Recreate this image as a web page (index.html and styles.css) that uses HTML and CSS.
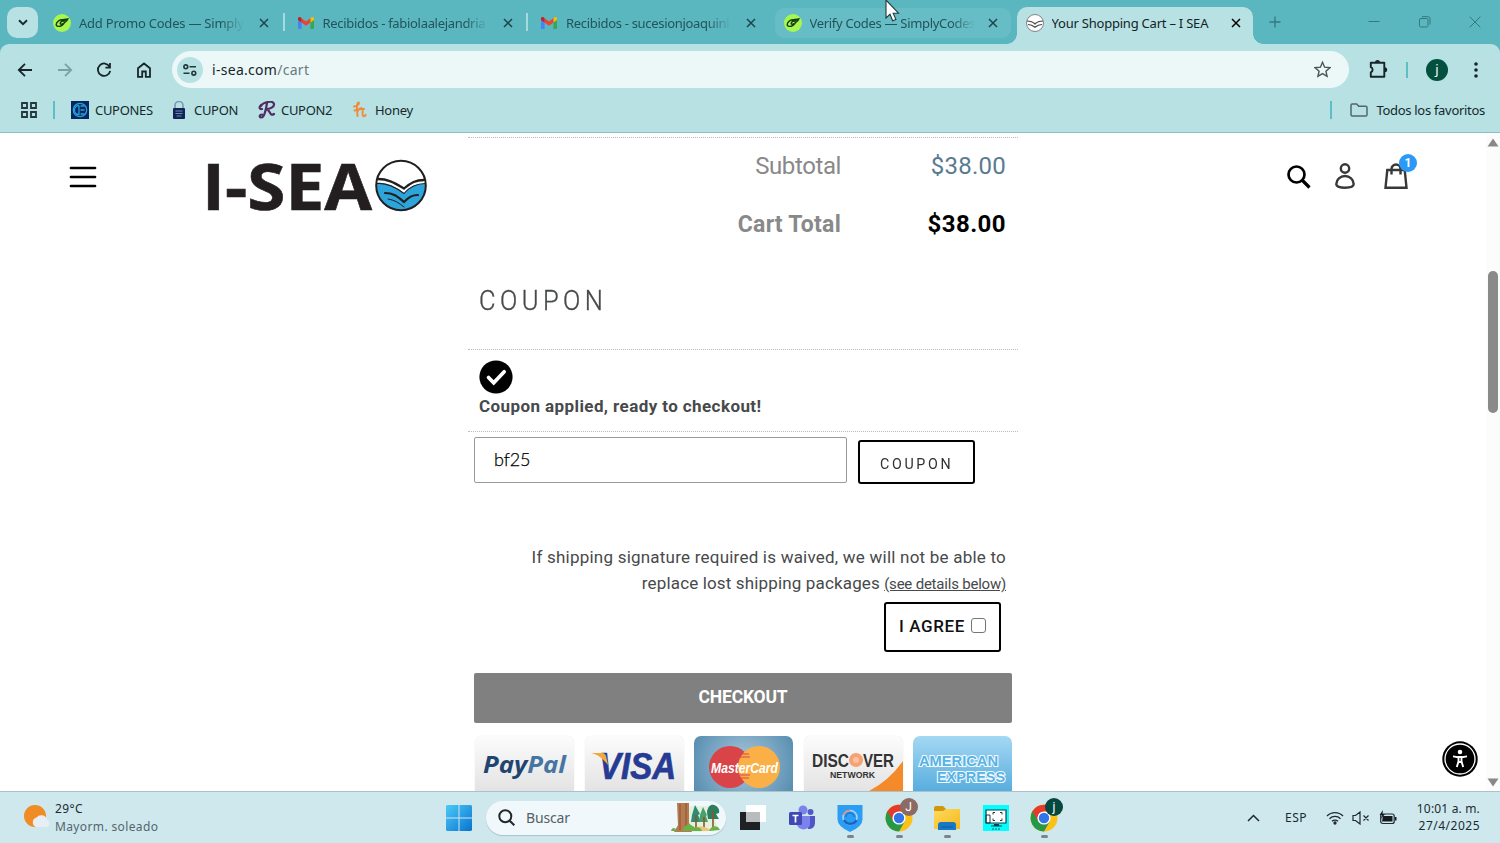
FILE: index.html
```html
<!DOCTYPE html>
<html lang="es">
<head>
<meta charset="utf-8">
<title>Your Shopping Cart – I SEA</title>
<link rel="stylesheet" href="styles.css">
</head>
<body>
<svg class="defs" width="0" height="0" aria-hidden="true">
  <defs>
    <symbol id="x" viewBox="0 0 10 10"><path d="M1 1l8 8M9 1L1 9" fill="none" stroke="currentColor" stroke-width="1.5"/></symbol>
    <symbol id="simply" viewBox="0 0 18 18"><circle cx="9" cy="9" r="9" fill="#a6f750"/><path d="M10.500 6C7 5 3.300 8 3.200 10.500c0 2.500 3.500 2.300 5.800.8 2-1.300 3-3 2-4-1.200-1-3.800.6-3.800 2.200 0 1 1.500.8 2.300.2M8.500 7.500L14.800 5c-.5 1.500-1.500 2.500-3 3.500M9.500 5.600l5.300-.6" fill="none" stroke="#173d16" stroke-width="1.400" stroke-linecap="round"/></symbol>
    <symbol id="gmail" viewBox="0 0 16 12"><path d="M0 2v9a1 1 0 001 1h2.600V5z" fill="#4285f4"/><path d="M16 2v9a1 1 0 01-1 1h-2.600V5z" fill="#34a853"/><path d="M12.400 1.400V5.500L16 3V1.500C16 0 14.300-.4 13.200.5z" fill="#fbbc04"/><path d="M3.600 5.500V1.300L8 4.600l4.400-3.300v4.200L8 8.800z" fill="#ea4335"/><path d="M0 1.500V3l3.600 2.600V1.300L2.800.5C1.700-.4 0 0 0 1.500z" fill="#c5221f"/></symbol>
    <symbol id="chrome" viewBox="0 0 28 28"><circle cx="14" cy="14" r="13.500" fill="#fbc116"/><path d="M2.300 7.300A13.500 13.500 0 0014 27.500L20 17 14 14z" fill="#279847"/><path d="M14 7.500h11.700A13.500 13.500 0 002.300 7.300L8.200 17z" fill="#e33b2e"/><circle cx="14" cy="14" r="6.600" fill="#fff"/><circle cx="14" cy="14" r="5.200" fill="#2f74e8"/></symbol>
    <linearGradient id="win" x1="0" y1="0" x2="1" y2="1"><stop offset="0" stop-color="#4dcaf8"/><stop offset="1" stop-color="#0873cf"/></linearGradient>
    <linearGradient id="fold" x1="0" y1="0" x2="1" y2="1"><stop offset="0" stop-color="#ffd95b"/><stop offset="1" stop-color="#f6b91e"/></linearGradient>
  </defs>
</svg>

<header class="tabs">
  <div class="tab-search"><svg width="10" height="7" viewBox="0 0 10 7"><path d="M1 1.200l4 4 4-4" fill="none" stroke="#1b2c2d" stroke-width="2"/></svg></div>
  <div class="tab">
    <svg class="fav" viewBox="0 0 18 18"><use href="#simply"/></svg><span class="tab-title fade">Add Promo Codes — Simply</span><svg class="close"><use href="#x"/></svg>
  </div>
  <div class="sep"></div>
  <div class="tab">
    <svg class="fav mail" viewBox="0 0 16 12"><use href="#gmail"/></svg><span class="tab-title fade tight">Recibidos - fabiolaalejandria</span><svg class="close"><use href="#x"/></svg>
  </div>
  <div class="sep"></div>
  <div class="tab">
    <svg class="fav mail" viewBox="0 0 16 12"><use href="#gmail"/></svg><span class="tab-title fade tight">Recibidos - sucesionjoaquinl</span><svg class="close"><use href="#x"/></svg>
  </div>
  <div class="sep hidden"></div>
  <div class="tab hover">
    <svg class="fav" viewBox="0 0 18 18"><use href="#simply"/></svg><span class="tab-title fade tight">Verify Codes — SimplyCodes</span><svg class="close"><use href="#x"/></svg>
  </div>
  <div class="tab active">
    <svg class="fav" viewBox="0 0 18 18"><circle cx="9" cy="9" r="8.500" fill="#fff" stroke="#777" stroke-width=".9"/><path d="M1 7c4 0 6 1 8 3 2-2 4-3 8-3M2 10.500c3.500 0 5 1 7 2.700 2-1.700 3.500-2.700 7-2.700" fill="none" stroke="#444" stroke-width="1.200"/></svg><span class="tab-title">Your Shopping Cart – I SEA</span><svg class="close"><use href="#x"/></svg>
  </div>
  <svg class="newtab" width="12" height="12"><path d="M6 .5v11M.5 6h11" stroke="#35787d" stroke-width="1.300"/></svg>
  <div class="window-controls">
    <svg width="12" height="12"><path d="M.5 5.500h11" stroke="#35787d"/></svg>
    <svg width="12" height="12" fill="none" stroke="#35787d"><rect x=".5" y="2.500" width="8.500" height="8.500" rx="1.500"/><path d="M3 .7h6a2 2 0 012 2v6"/></svg>
    <svg width="12" height="12"><path d="M.7.7l10.600 10.600M11.300.7L.7 11.300" stroke="#35787d"/></svg>
  </div>
</header>

<div class="chrome">
  <nav class="toolbar">
    <svg class="nav" viewBox="0 0 16 16"><path d="M15 8H2M8 1.800L1.800 8 8 14.200"/></svg>
    <svg class="nav dim" viewBox="0 0 16 16"><path d="M1 8h13M8 1.800L14.200 8 8 14.200"/></svg>
    <svg class="nav" viewBox="0 0 16 16"><path d="M13.600 4.800A6.200 6.200 0 1014.200 8.800M14 1v4.600H9.400"/></svg>
    <svg class="nav" viewBox="0 0 16 16"><path d="M2 6.200L8 1.500l6 4.700v8.600H9.800V9.500H6.200v5.300H2z"/></svg>
    <div class="omnibox">
      <div class="site"><svg width="14" height="12" fill="none" stroke="#22383a" stroke-width="1.600"><circle cx="2.800" cy="2.800" r="1.900"/><path d="M6.500 2.800H13M.5 9.200h6"/><circle cx="10.800" cy="9.200" r="1.900"/></svg></div>
      <span class="url">i-sea.com<span>/cart</span></span>
      <svg class="star" width="17" height="17" viewBox="0 0 17 17"><path d="M8.500 1.300l2.100 4.900 5.300.5-4 3.500 1.200 5.200-4.600-2.800-4.600 2.800 1.200-5.200-4-3.500 5.300-.5z" fill="none" stroke="#4b5558" stroke-width="1.400"/></svg>
    </div>
    <svg class="puzzle" width="19" height="19" viewBox="0 0 19 19"><path d="M1.800 2.800H15.300v13.900H1.800v-4.400a2.700 2.700 0 000-5.100z" fill="none" stroke="#182528" stroke-width="1.900" stroke-linejoin="round"/><path d="M6 2.500a2.500 2.500 0 015 0zM15.700 7.300a2.500 2.500 0 010 5z" fill="#182528"/></svg>
    <div class="rule"></div>
    <div class="avatar">j</div>
    <svg class="dots" width="4" height="16" fill="#182528"><circle cx="2" cy="2" r="1.800"/><circle cx="2" cy="8" r="1.800"/><circle cx="2" cy="14" r="1.800"/></svg>
  </nav>
  <nav class="bookmarks">
    <svg class="apps" width="16" height="16" fill="none" stroke="#22383a" stroke-width="1.800"><path d="M1 1h5v5H1zM10 1h5v5h-5zM1 10h5v5H1zM10 10h5v5h-5z"/></svg>
    <div class="rule"></div>
    <div class="bookmark b1"><svg width="18" height="18"><path d="M0 0h18v18H0z" fill="#06275c"/><g fill="none" stroke="#25a1df" stroke-width="1.300"><circle cx="9" cy="9" r="6.700"/><path d="M8 4.500a4.500 4.500 0 000 9V4.500M9.500 5h4M9.500 9h4M9.500 13h4"/></g></svg><span>CUPONES</span></div>
    <div class="bookmark b2"><svg width="14" height="18"><path d="M3 8V4.500a4 4 0 018 0V8" fill="none" stroke="#7898b4" stroke-width="1.600"/><rect x="1" y="7" width="12" height="11" rx="1" fill="#102456"/><path d="M3.500 10h7M3.500 12.500h7M4.500 15h5" stroke="#7187b5"/></svg><span>CUPON</span></div>
    <div class="bookmark b3"><svg width="18" height="18"><path d="M3 5C5 1 15-1 16 3c.6 3-4 5-8 5 4 0 3.500 8 8 5M9 2C8 9 6 17 3 16.500c-2-.4-1.500-3 1-3M4 8c-3 .5-3-2-1-4" fill="none" stroke="#512b63" stroke-width="2.200" stroke-linecap="round"/></svg><span>CUPON2</span></div>
    <div class="bookmark b4"><svg width="14" height="17" viewBox="0 0 14 17"><path d="M1 5.500C3.500 5.500 6.500 3.500 6 1.800 5.300.6 3.800 2.500 3.900 6L4.500 15M4.500 10.500C6 6.500 10 6 9.800 9.500c-.2 2.500-1 5.300.8 5.700 1 .2 1.900-.4 2-1.400M1.500 9.500c3-1 6-1.500 9.500-1.500" fill="none" stroke="#f18b3a" stroke-width="1.900" stroke-linecap="round"/></svg><span>Honey</span></div>
    <div class="rule all-rule"></div>
    <div class="bookmark all"><svg width="18" height="14"><path d="M1 2.200A1.200 1.200 0 012.200 1h4.500l2 2.200h7A1.300 1.300 0 0117 4.500v7.300a1.200 1.200 0 01-1.200 1.200H2.200A1.200 1.200 0 011 11.800z" fill="none" stroke="#53676b" stroke-width="1.500"/></svg><span>Todos los favoritos</span></div>
  </nav>
</div>

<main class="page">
  <div class="left">
    <svg class="menu" width="28" height="22"><path d="M2 2h24M2 11h24M2 20h24" stroke="#000" stroke-width="2.700" stroke-linecap="round"/></svg>
    <svg class="logo" width="230" height="70" viewBox="-10 -8 230 70">
      <text x="-7" y="50.500" textLength="170" lengthAdjust="spacingAndGlyphs" class="logo-text">I-SEA</text>
      <circle cx="192" cy="26.500" r="24.500" fill="#fff"/>
      <path d="M168 24c10-1 19 4 27 10 6-7 13-10 21.500-10A24.500 24.500 0 11168 24z" fill="#2da5da"/>
      <path d="M168.500 21c11 0 18 5 26.500 10 7-6 12-9 20.500-9l1 2.500C208 24 201 27 195 34c-8-6-17-11-27-10z" fill="#fff"/>
      <g fill="none" stroke="#231f20" stroke-linecap="round"><circle cx="192" cy="26.500" r="24.800" stroke-width="2"/><path d="M169 20c11 0 18 5 26 9.500 7-6 12-8.500 20-8.500" stroke-width="2.300"/><path d="M168 24.500c10-1 19 4 27 10 6-7 13-10 21.500-10" stroke-width="1.100"/><path d="M176 34c9 0 13 4 19 9 5-5 8-7 14-7" stroke-width="2.200"/><path d="M179 40c7 1 11 4 16 8" stroke-width="1"/></g>
    </svg>
  </div>

  <section class="cart">
    <div class="row subtotal"><span>Subtotal</span><b>$38.00</b></div>
    <div class="row total"><span>Cart Total</span><b>$38.00</b></div>
    <h2><span>COUPON</span></h2>
    <div class="applied">
      <svg width="34" height="34"><circle cx="17" cy="17" r="16.600"/><path d="M9.500 17.500l5.200 5.300 10.500-11" fill="none" stroke="#fff" stroke-width="3.700" stroke-linecap="round"/></svg>
      <strong>Coupon applied, ready to checkout!</strong>
    </div>
    <div class="coupon-form"><div class="field">bf25</div><div class="apply"><span>COUPON</span></div></div>
    <p class="notice"><span class="n1">If shipping signature required is waived, we will not be able to</span><br><span class="n2">replace lost shipping packages</span> <a>(see details below)</a></p>
    <label class="agree">I AGREE<i></i></label>
    <div class="checkout">CHECKOUT</div>
    <div class="cards">
      <svg class="card pale" viewBox="0 0 99 62"><text x="8" y="37" textLength="83" lengthAdjust="spacingAndGlyphs" class="paypal"><tspan fill="#20456f">Pay</tspan><tspan fill="#4675a2">Pal</tspan></text></svg>
      <svg class="card pale" viewBox="0 0 99 62"><text x="14" y="43" textLength="77" lengthAdjust="spacingAndGlyphs" class="visa">VISA</text><path d="M6 17h12q3 1 3.500 5l1.500 7C18 23 14 19 6 17z" fill="#f0aa3b"/></svg>
      <svg class="card master" viewBox="0 0 99 62"><circle cx="36" cy="31" r="21" fill="#d94448"/><circle cx="65" cy="31" r="21" fill="#fbb047"/><path d="M46 18h9M45 21h11M45 39h11M46 42h9" stroke="#d94448"/><text x="17" y="36.500" textLength="67" lengthAdjust="spacingAndGlyphs" class="mc">MasterCard</text></svg>
      <svg class="card pale" viewBox="0 0 99 62"><path d="M99 25v37H48Q80 52 99 25z" fill="#f58a2b"/><text x="8" y="30.500" textLength="37" lengthAdjust="spacingAndGlyphs" class="disc">DISC</text><circle cx="52" cy="24" r="7" fill="#f7a274"/><circle cx="52" cy="24" r="3" fill="#fac0a0"/><text x="59" y="30.500" textLength="31" lengthAdjust="spacingAndGlyphs" class="disc">VER</text><text x="26" y="41.500" textLength="45" lengthAdjust="spacingAndGlyphs" class="net">NETWORK</text></svg>
      <svg class="card amex" viewBox="0 0 99 62"><text x="6" y="29.500" textLength="79" lengthAdjust="spacingAndGlyphs" class="am">AMERICAN</text><text x="24" y="45.500" textLength="68" lengthAdjust="spacingAndGlyphs" class="am">EXPRESS</text></svg>
    </div>
  </section>

  <div class="right">
    <div class="actions">
      <svg width="24" height="24" fill="none" stroke="#000"><circle cx="9.500" cy="9.500" r="8" stroke-width="2.700"/><path d="M15.500 15.500l7 7" stroke-width="3.200"/></svg>
      <svg width="20" height="26" fill="none" stroke="#36383a" stroke-width="2.400"><circle cx="10" cy="5.500" r="4.200"/><path d="M1.300 21c0-4.500 4-8 8.700-8s8.700 3.500 8.700 8c0 2.500-3.700 3.700-8.700 3.700S1.300 23.500 1.300 21z"/></svg>
      <div class="bag"><svg width="24" height="26" fill="none" stroke="#36383a" stroke-width="2.400"><path d="M3.300 7h17.400L22.500 24.700h-21zM7.500 11.500V6a4.500 4.500 0 019 0v5.500"/></svg><em>1</em></div>
    </div>
    <svg class="access" width="36" height="36"><circle cx="18" cy="18" r="17.700"/><circle cx="18" cy="18" r="15" fill="none" stroke="#fff" stroke-width="1.300"/><circle cx="18" cy="11" r="2.300" fill="#fff"/><path d="M11 15.400l5.500 1v4L14.800 26M25 15.400l-5.500 1v4l1.700 5.600M16.500 16h3v5h-3z" fill="none" stroke="#fff" stroke-width="1.900"/></svg>
  </div>
  <div class="scroll"><svg width="12" height="9"><path d="M6 .5L11.500 8.500H.5z" fill="#888"/></svg><div class="thumb"></div><svg width="12" height="9"><path d="M6 8.500L11.500.5H.5z" fill="#888"/></svg></div>
</main>

<footer class="taskbar">
  <div class="weather"><svg width="27" height="25"><circle cx="12" cy="12" r="11" fill="#f08c24"/><path d="M13 23a5 5 0 01.5-9.500 6 6 0 0110.500 2 4 4 0 01-.5 7.500z" fill="#e9edf4"/></svg><div>29°C<br><span>Mayorm. soleado</span></div></div>
  <div class="dock">
    <svg class="start" width="26" height="26"><path d="M1 0h11.500v12.500H0V1zM13.500 0H25l1 1v11.500H13.500zM0 13.500h12.500V26H1l-1-1zM13.500 13.500H26V25l-1 1H13.500z" fill="url(#win)"/></svg>
    <div class="search"><svg width="17" height="17" fill="none" stroke="#22272b" stroke-width="2"><circle cx="7.300" cy="7.300" r="6"/><path d="M11.700 11.700l4.600 4.600"/></svg><span>Buscar</span>
      <svg class="forest" width="50" height="30" viewBox="0 0 50 30"><path d="M19 3h22l6 24-18 2H13z" fill="#e3f2dc"/><path d="M21 12l3-10 5 9-2 1 3 7H20z" fill="#2f8b74"/><path d="M29 12l3-8 4 8-1 1 2 6h-9z" fill="#4aa06c"/><path d="M36 9c1-6 4-8 7-7 4 1 6 5 5 8l-3 1 3 5h-11z" fill="#2b7f60"/><path d="M25 12v14M33 14v12M42 8v18" stroke="#8c552b" stroke-width="1.600"/><path d="M6 0h12v22l3 7H3l4-7z" fill="#b57a50"/><path d="M9 1v26M15 0v28" stroke="#8a5533" stroke-width="1"/><path d="M21 28c5-7 14-5 20 0z" fill="#e9c67a"/><path d="M12 28c0-5 4-5 6-8 2 3 5 3 6 5 3-2 6 0 7 3zM38 28c2-5 8-7 11-1zM0 28c1-4 4-4 6 0z" fill="#6cb04a"/></svg>
    </div>
    <svg class="app tv" width="28" height="28"><path d="M1 8h20v18H1z" fill="#202124"/><path d="M7 1h20v17H7z" fill="#fff"/><path d="M7 8h14v10H7z" fill="#b9bcbe"/></svg>
    <svg class="app" width="28" height="28"><circle cx="22.500" cy="8" r="3" fill="#5358c8"/><path d="M18 12h9v7a6 6 0 01-7 6z" fill="#5156c4"/><circle cx="15" cy="6" r="4.500" fill="#7b83eb"/><path d="M9 12h13v9a7 7 0 01-13 0z" fill="#7b83eb"/><rect x="1" y="8" width="13" height="13" rx="1.500" fill="#3f48b4"/><path d="M4.500 11.500h6M7.500 11.500v7" stroke="#fff" stroke-width="1.700"/></svg>
    <div class="app run"><svg width="28" height="28"><path d="M1.500 1h25v14.500q0 7-12.500 12.500Q1.500 22.500 1.500 15.500z" fill="#2b9df4"/><circle cx="14" cy="13.500" r="7" fill="none" stroke="#a5d7f5" stroke-width="1.500"/><path d="M7.500 11A7 7 0 0114 6.500" fill="none" stroke="#ef8b6c" stroke-width="1.500"/><path d="M8 16a7 7 0 0012.500 0" fill="none" stroke="#1765be" stroke-width="2.500"/><path d="M10 13a4 4 0 018 0" fill="none" stroke="#1b77d2" stroke-width="1.500"/></svg></div>
    <div class="app run"><svg width="28" height="28"><use href="#chrome"/></svg><em class="badge brown">J</em></div>
    <div class="app run"><svg width="28" height="28"><path d="M1 4a2 2 0 012-2h7l3 3v5H1z" fill="#d4960c"/><path d="M1 7h9l3-2h14v20H1z" fill="url(#fold)"/><path d="M5 26v-5a3 3 0 013-3h12a3 3 0 013 3v5z" fill="#1778c7"/><path d="M8 23h12" stroke="#0c5b9d"/></svg></div>
    <svg class="app" width="28" height="28"><path d="M1 1h26v26H1z" fill="#0ff"/><path d="M4 6h20v13H4z" fill="#fff" stroke="#183c45" stroke-width="1.200"/><path d="M4 11h4v8H4zM11 10.500V8.500h2M18 8.500h2v2M11 14.500v2h2M18 16.500h2v-2" fill="none" stroke="#183c45"/><path d="M12 20h5v1.500h3v1H9v-1h3z" fill="#183c45"/><path d="M10 25h9" stroke="#168" stroke-dasharray="2 1"/></svg>
    <div class="app run"><svg width="28" height="28"><use href="#chrome"/></svg><em class="badge green">j</em></div>
  </div>
  <div class="tray">
    <svg width="13" height="8"><path d="M1 7l5.500-5.500L12 7" fill="none" stroke="#1d2a30" stroke-width="1.500"/></svg>
    <span class="lang">ESP</span>
    <svg class="wifi" width="18" height="14" fill="none" stroke="#1d2a30" stroke-width="1.300"><path d="M1 5a11.300 11.300 0 0116 0M3.500 7.700a7.800 7.800 0 0111 0M6 10.300a4.200 4.200 0 016 0"/><circle cx="9" cy="12" r="1" fill="#1d2a30"/></svg>
    <svg class="mute" width="18" height="14" fill="none" stroke="#1d2a30" stroke-width="1.200"><path d="M1 4.500h2.500L8 1v12L3.500 9.500H1zM11.500 4.500l5 5M16.500 4.500l-5 5"/></svg>
    <svg class="battery" width="18" height="15"><rect x="1.700" y="4" width="13.500" height="9.500" rx="2" fill="none" stroke="#1d2a30" stroke-width="1.200"/><path d="M4 6h9.500v5.500H3zM16 7h1.500v3.500H16zM4 0L.5 5H3L2 9l4-5H3.500z" fill="#111b20"/></svg>
    <div class="clock"><span>10:01 a. m.</span><br>27/4/2025</div>
  </div>
</footer>
<svg class="cursor" width="15" height="23" viewBox="0 0 15 23"><path d="M1 0v18l4-3.700 2.700 6.500 3.200-1.400-2.700-6.200h5.300z" fill="#fff" stroke="#26383b" stroke-width="1.100"/></svg>
</body>
</html>
```
FILE: styles.css
```css
* { box-sizing: border-box; }
body { margin: 0; width: 1500px; height: 843px; overflow: hidden; display: flex; flex-direction: column; background: #5ab6bf; font-family: "Noto Sans", sans-serif; font-size: 13px; color: #1d3133; }
svg { display: block; flex: none; }
.defs { position: absolute; }

/* Tab strip */
.tabs { height: 44px; flex: none; display: flex; align-items: center; padding-left: 7px; }
.tab-search { width: 31px; height: 31px; border-radius: 10px; background: #b8e1e4; margin: 1px 6px 0 0; display: grid; place-items: center; }
.tab { width: 236px; height: 30px; margin-top: 1px; border-radius: 9px; display: flex; align-items: center; padding-left: 9px; color: #24545a; }
.fav { width: 18px; height: 18px; margin-right: 8px; }
.mail { width: 16px; height: 12px; margin: 0 9px 0 1px; }
.tab-title { width: 165px; margin-right: 15px; white-space: nowrap; overflow: hidden; letter-spacing: -.22px; line-height: 20px; }
.fade { -webkit-mask-image: linear-gradient(90deg, #000 86%, transparent); mask-image: linear-gradient(90deg, #000 86%, transparent); }
.tight { letter-spacing: -.31px; }
.close { width: 10px; height: 10px; color: #1d454a; }
.sep { width: 2px; height: 18px; background: #a5dade; margin: 0 2.75px; }
.hidden { background: none; }
.hover { background: #66bdc5; }
.hover .tab-title { margin-right: 13px; }
.active { position: relative; background: #b8e1e4; height: 37px; margin: 7px 0 0 6px; padding-bottom: 5px; border-radius: 10px 10px 0 0; color: #122426; }
.active .tab-title { margin-right: 14px; }
.active .close { color: #000; }
.active::before, .active::after { content: ""; position: absolute; bottom: 0; width: 10px; height: 10px; }
.active::before { left: -10px; background: radial-gradient(circle at 0 0, transparent 9.5px, #b8e1e4 10px); }
.active::after { right: -10px; background: radial-gradient(circle at 100% 0, transparent 9.5px, #b8e1e4 10px); }
.newtab { margin-left: 16px; }
.window-controls { margin-left: auto; padding-right: 19px; display: flex; gap: 38.5px; }

/* Toolbar and bookmarks */
.chrome { height: 89px; flex: none; background: #b8e1e4; border-radius: 9px 9px 0 0; border-bottom: 1px solid #8dbcc1; }
.toolbar { height: 51px; display: flex; align-items: center; padding-left: 17px; }
.nav { width: 16px; height: 16px; margin-right: 23.5px; fill: none; stroke: #182528; stroke-width: 1.8; }
.dim { stroke: #7ba0a7; }
.omnibox { width: 1177px; height: 37px; border-radius: 19px; background: #ecf7f8; margin-left: -3px; display: flex; align-items: center; padding: 0 18px 0 5px; }
.site { width: 26px; height: 26px; border-radius: 50%; background: #b8e1e4; display: grid; place-items: center; margin-right: 9px; }
.url { font-size: 14px; letter-spacing: .29px; color: #14272a; }
.url span { color: #687c80; }
.star { margin-left: auto; }
.puzzle { margin-left: 20px; }
.rule { width: 2px; height: 18px; background: #5ebdc5; }
.toolbar .rule { margin-left: 18px; height: 16px; }
.avatar { width: 22px; height: 22px; border-radius: 50%; background: #04503f; color: #fff; font-size: 13px; line-height: 21px; text-align: center; margin-left: 18px; }
.dots { margin-left: 26px; }
.bookmarks { height: 30px; padding: 0 15px 1px 21px; display: flex; align-items: center; letter-spacing: -.3px; color: #14292c; }
.apps { margin-right: 16px; }
.bookmark { display: flex; align-items: center; }
.bookmark svg { margin-right: 6px; }
.b1 { margin-left: 16px; width: 101px; }
.b2 { width: 86px; }
.b2 svg { margin-right: 8px; }
.b3 { width: 95px; }
.b3 svg { margin-right: 5px; }
.b4 svg { margin-right: 8px; }
.all-rule { margin-left: auto; margin-right: 18px; }
.all svg { margin-right: 8px; }

/* Store page */
.page { flex: none; height: 658px; display: flex; overflow: hidden; background: #fff; }
.left { width: 468px; padding: 18px 0 0 69px; display: flex; align-items: flex-start; }
.menu { margin-top: 15px; }
.logo { margin-left: 102px; }
.logo-text { font: 700 64px "Open Sans", sans-serif; fill: #231f20; stroke: #231f20; stroke-width: .6px; }
.cart { width: 550px; flex: none; margin-top: 4px; border-top: 1px dotted #bbb; font-family: Roboto, sans-serif; color: #47494b; }
.row { display: flex; justify-content: flex-end; height: 58px; line-height: 57px; font-size: 24px; padding-right: 12px; }
.row span { color: #898989; letter-spacing: -.4px; }
.row b { width: 165px; text-align: right; font-weight: 400; color: #597b90; letter-spacing: .25px; }
.total { font-weight: 700; }
.total span { font-size: 23px; letter-spacing: .25px; }
.total b { font-weight: 700; color: #000; letter-spacing: .44px; }
.cart h2 { margin: 0; height: 95px; padding: 27px 0 0 11px; font-size: 28px; line-height: 40px; font-weight: 300; }
.cart h2 span { display: block; width: 200px; transform: scaleX(.91); transform-origin: 0 50%; letter-spacing: 4.9px; -webkit-text-stroke: .35px #47494b; }
.applied { height: 83px; border: 1px dotted #bbb; border-width: 1px 0; padding: 10px 0 0 11px; font-size: 17px; letter-spacing: .41px; }
.applied strong { display: block; line-height: 24px; }
.coupon-form { display: flex; padding: 5px 0 0 6px; gap: 11px; }
.field { width: 373px; height: 46px; border: 1px solid #999; border-radius: 2px; padding-left: 19px; line-height: 43px; font-family: Lato, sans-serif; font-size: 18px; font-weight: 300; letter-spacing: -.1px; color: #000; -webkit-text-stroke: .25px #000; }
.apply { width: 117px; height: 44px; margin-top: 3px; border: 2px solid #000; border-radius: 3px; padding-left: 20px; line-height: 44px; font-size: 15.5px; color: #303030; }
.apply span { display: block; width: 92px; transform: scaleX(.92); transform-origin: 0 50%; letter-spacing: 2.9px; }
.notice { margin: 60px 12px 0 0; font-size: 17px; line-height: 26px; text-align: right; }
.n1 { letter-spacing: .22px; }
.n2 { letter-spacing: .15px; }
.notice a { font-size: 15px; letter-spacing: -.21px; text-decoration: underline; }
.agree { display: flex; width: 117px; height: 50px; margin: 5px 17px 0 auto; border: 2px solid #000; border-radius: 3px; padding: 0 0 2px 13px; align-items: center; font-size: 17px; font-weight: 500; letter-spacing: .6px; line-height: 44px; color: #111; }
.agree i { width: 15px; height: 15px; border: 1px solid #767676; border-radius: 3px; margin: -2px 0 0 6px; }
.checkout { width: 538px; height: 50px; margin: 21px 0 0 6px; border-radius: 2px; background: #808080; color: #fff; text-align: center; line-height: 49px; font-size: 17.5px; font-weight: 700; letter-spacing: -.2px; }
.cards { display: flex; gap: 10.5px; margin: 13px 0 0 7px; }
.card { width: 99px; height: 62px; border-radius: 7px; }
.pale { background: linear-gradient(#fcfcfc, #e0e0e0); box-shadow: 0 0 1px #ccc; }
.master { background: radial-gradient(circle at 50% 45%, #a8c8dc, #5189ad); }
.amex { background: linear-gradient(#a5d8f3, #4ea8dc); }
.paypal { font: italic 700 24px "Open Sans", sans-serif; }
.visa { font: italic 700 36px "Liberation Sans", sans-serif; fill: #263b94; stroke: #263b94; stroke-width: .7px; }
.mc { font: italic 700 15px "Liberation Sans", sans-serif; fill: #fff; }
.disc { font: 700 17.5px "Liberation Sans", sans-serif; fill: #333; }
.net { font: 700 9px "Liberation Sans", sans-serif; fill: #333; }
.am { font: 700 15px "Liberation Sans", sans-serif; fill: #58b2e3; stroke: #f4fbff; stroke-width: 2.2px; paint-order: stroke; }
.right { width: 468px; display: flex; flex-direction: column; justify-content: space-between; align-items: flex-end; padding: 30px 8px 14px 0; }
.actions { display: flex; align-items: center; gap: 24px; margin-right: 70px; }
.actions > :first-child { margin-top: 2px; }
.bag { position: relative; margin-left: 5px; }
.bag em { position: absolute; left: 15px; top: -9px; width: 18px; height: 18px; border-radius: 50%; background: #2c98f7; color: #fff; font: 700 12px/18px Roboto, sans-serif; text-align: center; }
.scroll { width: 14px; background: #fcfcfc; display: flex; flex-direction: column; align-items: center; padding: 5px 1px 4px 0; }
.thumb { width: 10px; height: 142px; margin: 124px 0 auto; border-radius: 5px; background: #8a8a8a; }

/* Taskbar */
.taskbar { flex: none; height: 52px; border-top: 1px solid #a9c3c9; background: #cfe8ee; display: flex; justify-content: space-between; }
.weather { display: flex; width: 420px; padding: 8px 0 0 23px; font-size: 12px; line-height: 17.5px; letter-spacing: .4px; gap: 5px; color: #1b2b30; }
.weather svg { margin-top: 4px; }
.weather span { color: #53666c; letter-spacing: .37px; }
.dock { display: flex; align-items: center; width: 660px; flex: none; padding-left: 26px; }
.search { width: 240px; height: 34px; flex: none; margin: 0 13px 0 14px; border-radius: 17px; background: #f0f8fb; box-shadow: 0 1px 1px #aac3ca; display: flex; align-items: center; padding-left: 12px; font-size: 14px; color: #566066; letter-spacing: -.16px; }
.search span { margin-left: 11px; }
.forest { margin-left: auto; margin-right: 5px; }
.app { width: 28px; height: 28px; margin-right: 20.5px; position: relative; flex: none; }
.run::after { content: ""; position: absolute; left: 11px; bottom: -6px; width: 7px; height: 3px; border-radius: 2px; background: #76868c; }
.badge { position: absolute; left: 15px; top: -6px; width: 18px; height: 18px; border-radius: 50%; color: #fff; font: 400 12px/18px Roboto, sans-serif; text-align: center; }
.brown { background: #8b6b63; }
.green { background: #04483f; }
.tray { display: flex; align-items: center; width: 420px; padding-left: 167px; font-size: 12px; color: #1b2b30; }
.lang { margin-left: 25px; letter-spacing: .5px; width: 24px; }
.wifi { margin-left: 19px; }
.mute { margin-left: 8px; }
.battery { margin-left: 9px; }
.clock { width: 90px; margin: -1px 20px 0 auto; text-align: right; line-height: 17.5px; letter-spacing: .5px; }
.clock span { letter-spacing: .17px; }
.cursor { position: absolute; left: 885px; top: 0; }
```
